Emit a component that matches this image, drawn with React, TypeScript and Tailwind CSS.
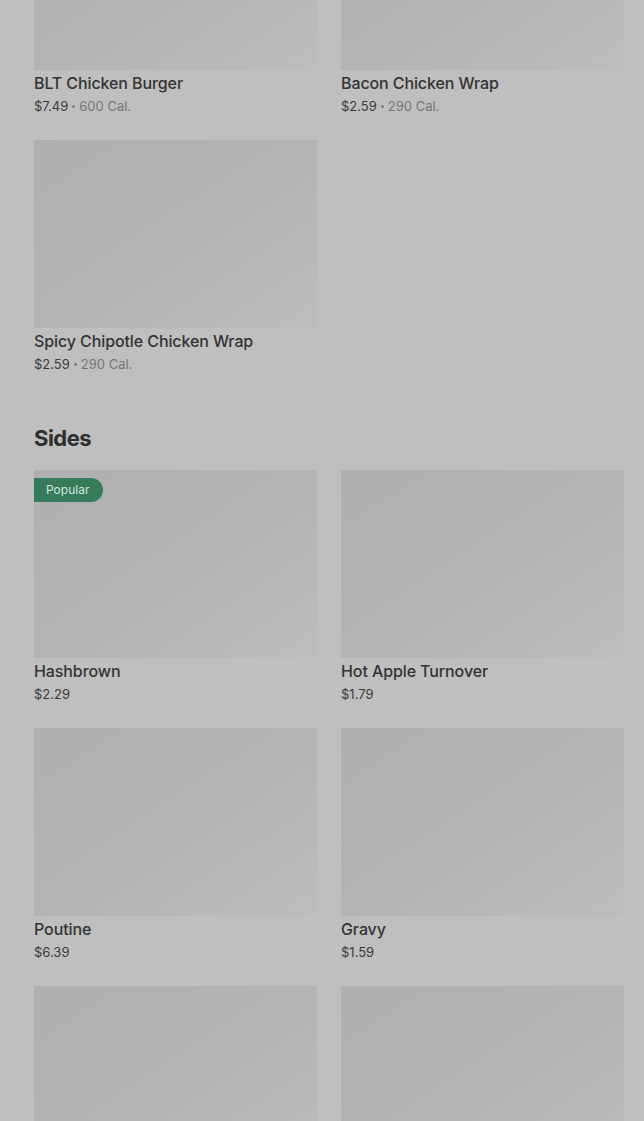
import React from 'react';

type Item = { name: string; price: string; cal?: string; popular?: boolean };

const wraps: Item[] = [
  { name: 'BLT Chicken Burger', price: '$7.49', cal: '600 Cal.' },
  { name: 'Bacon Chicken Wrap', price: '$2.59', cal: '290 Cal.' },
  { name: 'Spicy Chipotle Chicken Wrap', price: '$2.59', cal: '290 Cal.' },
];

const sides: Item[] = [
  { name: 'Hashbrown', price: '$2.29', popular: true },
  { name: 'Hot Apple Turnover', price: '$1.79' },
  { name: 'Poutine', price: '$6.39' },
  { name: 'Gravy', price: '$1.59' },
  { name: '', price: '' },
  { name: '', price: '' },
];

function Card({ item }: { item: Item }) {
  return (
    <div className="flex flex-col">
      <div className="relative h-[188px] w-full bg-gradient-to-br from-[#afafaf] via-[#b3b3b3] to-[#bdbdbd]">
        {item.popular && (
          <span className="absolute left-0 top-2 flex h-6 items-center rounded-r-full bg-[#357b5c] pl-3 pr-3.5 text-[12px] text-[#d6e7dd]">
            Popular
          </span>
        )}
      </div>
      {item.name && (
        <div className="pt-[3px]">
          <div className="text-[16px] font-medium leading-[20px] tracking-[-0.1px] text-[#333333]">{item.name}</div>
          <div className="mt-[3px] flex items-center text-[13px] leading-[20px] text-[#3a3a3a]">
            {item.price}
            {item.cal && (
              <>
                <span className="mx-[4px] inline-block h-[3px] w-[3px] rounded-full bg-[#7a7a7a]" />
                <span className="text-[#767676]">{item.cal}</span>
              </>
            )}
          </div>
        </div>
      )}
    </div>
  );
}

export default function App() {
  return (
    <div
      className="min-h-[1121px] w-full overflow-hidden bg-[#bfbfbf] pl-[34px] pr-[20px]"
      style={{ fontFamily: 'Inter, "Noto Sans", sans-serif' }}
    >
      <div className="-mt-[118px] grid grid-cols-2 gap-x-6 gap-y-[24px]">
        {wraps.map((it, i) => (
          <div key={i} className="h-[234px]">
            <Card item={it} />
          </div>
        ))}
      </div>
      <h2 className="mt-[48px] text-[22px] font-bold leading-[32px] tracking-[-0.5px] text-[#2f2f2f]">Sides</h2>
      <div className="mt-[16px] grid grid-cols-2 gap-x-6 gap-y-[24px]">
        {sides.map((it, i) => (
          <div key={i} className="h-[234px]">
            <Card item={it} />
          </div>
        ))}
      </div>
    </div>
  );
}
